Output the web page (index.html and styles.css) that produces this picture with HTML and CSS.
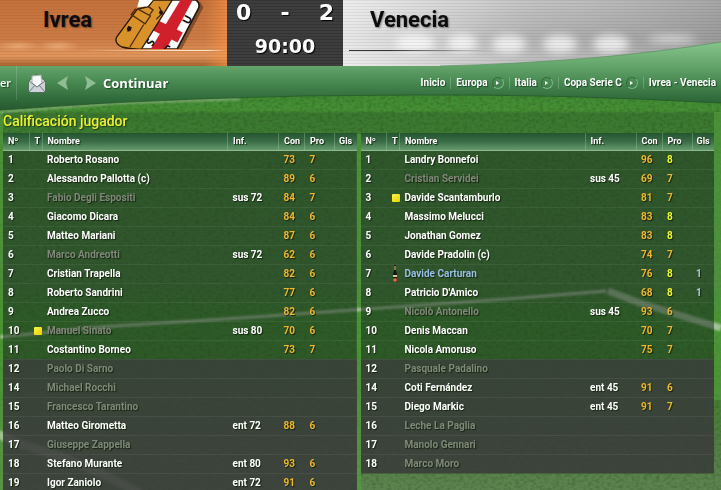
FILE: index.html
```html
<!DOCTYPE html>
<html lang="es">
<head>
    <meta charset="UTF-8">
    <meta name="viewport" content="width=device-width, initial-scale=1.0">
    <title>Ivrea - Venecia</title>
    <link rel="stylesheet" href="styles.css">
</head>
<body>
    <!-- Pitch and curved menu bar -->
    <svg class="backdrop" viewBox="0 0 721 490" preserveAspectRatio="none" aria-hidden="true">
        <defs>
            <linearGradient id="grass" x1="0" y1="0" x2="0" y2="490" gradientUnits="userSpaceOnUse">
                <stop offset="0.19" stop-color="#3f8a33"/>
                <stop offset="0.225" stop-color="#468f34"/>
                <stop offset="0.232" stop-color="#3b7830"/>
                <stop offset="0.3" stop-color="#3f7d32"/>
                <stop offset="0.58" stop-color="#437a39"/>
                <stop offset="0.64" stop-color="#3a842b"/>
                <stop offset="0.78" stop-color="#40832e"/>
                <stop offset="0.9" stop-color="#527e42"/>
                <stop offset="1" stop-color="#5d8450"/>
            </linearGradient>
            <linearGradient id="bar" x1="0" y1="42" x2="0" y2="110" gradientUnits="userSpaceOnUse">
                <stop offset="0" stop-color="#86c48a"/>
                <stop offset="0.35" stop-color="#64a56c"/>
                <stop offset="0.6" stop-color="#478750"/>
                <stop offset="0.85" stop-color="#2f6a3a"/>
                <stop offset="1" stop-color="#28592f"/>
            </linearGradient>
            <linearGradient id="stand" x1="0" y1="0" x2="0" y2="1">
                <stop offset="0" stop-color="#c6c6c6"/>
                <stop offset="0.5" stop-color="#b2b2b2"/>
                <stop offset="1" stop-color="#c4c4c4"/>
            </linearGradient>
            <linearGradient id="standSide" x1="0" y1="0" x2="1" y2="0">
                <stop offset="0" stop-color="#ffffff" stop-opacity="0.7"/>
                <stop offset="0.35" stop-color="#ffffff" stop-opacity="0.2"/>
                <stop offset="0.6" stop-color="#888888" stop-opacity="0.1"/>
                <stop offset="1" stop-color="#777777" stop-opacity="0.4"/>
            </linearGradient>
            <pattern id="scan" width="4" height="3" patternUnits="userSpaceOnUse">
                <rect width="4" height="1" fill="#000000" opacity="0.06"/>
            </pattern>
            <filter id="noise" x="0" y="0" width="1" height="1" color-interpolation-filters="sRGB">
                <feTurbulence type="fractalNoise" baseFrequency="0.25 0.35" numOctaves="3" seed="4"/>
                <feColorMatrix values="0 0 0 0 0.1  0 0 0 0 0.2  0 0 0 0 0.05  0.6 0 0 0 -0.24"/>
            </filter>
            <filter id="soft" x="-0.3" y="-0.3" width="1.6" height="1.6"><feGaussianBlur stdDeviation="4"/></filter>
            <filter id="chalk"><feGaussianBlur stdDeviation="1"/></filter>
        </defs>
        <rect y="60" width="721" height="430" fill="url(#grass)"/>
        <rect y="90" width="721" height="400" filter="url(#noise)"/>
        <path d="M0 112 H3 V490 H0 Z M356 134 H361 V490 H356 Z M714 112 H721 V400 H714 Z" fill="#5aa83f" opacity="0.5"/>
        <g fill="none" stroke="#d4dacd" filter="url(#chalk)">
            <path d="M0 337 L100 327 L240 318 L410 306 L520 298 L606 291" stroke-width="3" opacity="0.75"/>
            <path d="M608 291 L640 303 L721 328" stroke-width="7" opacity="0.65"/>
            <path d="M-5 433 L20 444 L60 456 L100 473 L140 493" stroke-width="9" opacity="0.6"/>
            <path d="M0 112 L120 103 L240 99" stroke-width="2" opacity="0.5"/>
        </g>
        <rect x="343" width="378" height="70" fill="url(#stand)"/>
        <rect x="343" width="378" height="70" fill="url(#standSide)"/>
        <g fill="#ffffff" filter="url(#soft)" opacity="0.75">
            <ellipse cx="415" cy="43" rx="20" ry="9"/>
            <ellipse cx="462" cy="43" rx="15" ry="9"/>
            <ellipse cx="509" cy="44" rx="17" ry="9"/>
            <ellipse cx="560" cy="44" rx="17" ry="9"/>
            <ellipse cx="611" cy="44" rx="18" ry="9"/>
            <ellipse cx="672" cy="39" rx="24" ry="3"/>
        </g>
        <rect x="343" width="378" height="70" fill="url(#scan)"/>
        <path d="M0 66 H440 Q600 62 721 42 V103 Q560 94 410 95 Q200 95 0 110 Z" fill="url(#bar)"/>
        <path d="M0 110 Q200 95 410 95 Q560 94 721 103" fill="none" stroke="#1f4d25" opacity="0.6"/>
        <path d="M440 66 Q600 62 721 42" fill="none" stroke="#5d8f62" opacity="0.7"/>
    </svg>

    <div class="screen">
        <header class="scoreboard">
            <div class="team team-home">
                <h2 class="team-name">Ivrea</h2>
                <svg class="badge" viewBox="0 0 300 148" aria-hidden="true">
                    <path d="M100 0 H265 L275 18 L207 148 H98 L40 142 Q16 130 22 116 Z" fill="#00000055" transform="translate(9 5)"/>
                    <path d="M110 0 H262 Q274 8 270 24 L205 148 H95 Z" fill="#ffffff" stroke="#241810" stroke-width="5"/>
                    <path d="M215 0 H252 L172 148 H125 Z" fill="#cf202c"/>
                    <path d="M148 62 L222 98 L206 128 L132 92 Z" fill="#cf202c"/>
                    <path d="M133 0 L118 20 L84 28 L22 112 Q14 130 38 142 Q65 149 97 148 L160 48 L190 0 Z" fill="#d9922a" stroke="#2c1a08" stroke-width="4"/>
                    <path d="M80 26 L66 44 L108 72 L124 48 L84 26 M118 20 L132 30 L122 44 M150 20 L160 40 L142 58 M104 74 L62 142" fill="none" stroke="#4b2c0b" stroke-width="4"/>
                    <path d="M90 0 H132 L112 20 L84 22 Z" fill="#ffffff"/>
                    <path d="M57 78 L68 82 L64 94 L55 96 L53 86 Z" fill="#20120a"/>
                    <circle cx="156" cy="38" r="6" fill="#20120a"/>
                    <path d="M166 148 L176 138 L184 142" fill="none" stroke="#111111" stroke-width="5"/>
                    <text class="badge-letter" transform="translate(240 76) rotate(-62)">U</text>
                    <text class="badge-letter" transform="translate(130 142) rotate(-62)">S</text>
                </svg>
            </div>
            <div class="score">
                <div class="score-goals"><span>0</span><span>-</span><span>2</span></div>
                <div class="score-time">90:00</div>
            </div>
            <div class="team team-away">
                <h2 class="team-name">Venecia</h2>
            </div>
        </header>

        <nav class="menu">
            <a class="menu-cut" href="#">er</a>
            <button class="icon-button mail" type="button" aria-label="Correo">
                <svg width="18" height="20" viewBox="0 0 18 20">
                    <path d="M1 8 L9 1 L17 8 V19 H1 Z" fill="#dfe4e6" stroke="#5b6c66"/>
                    <path d="M4 3 L13 2 L14 10 L9 14 L4 10 Z" fill="#f7f8f8" stroke="#a3aca9"/>
                    <path d="M1 8 L9 14 L17 8 V19 H1 Z" fill="#cdd3d6"/>
                    <path d="M1 19 L7 12 M17 19 L11 12 M1 8 L9 14 L17 8" fill="none" stroke="#6d7c79"/>
                </svg>
            </button>
            <button class="icon-button" type="button" aria-label="Atrás">
                <svg width="11" height="14" viewBox="0 0 11 14"><path d="M11 0 L0 7 L11 14 L9 7 Z" fill="#8fbd94"/></svg>
            </button>
            <button class="icon-button next" type="button" aria-label="Adelante">
                <svg width="11" height="14" viewBox="0 0 11 14"><path d="M0 0 L11 7 L0 14 L2 7 Z" fill="#8fbd94"/></svg>
            </button>
            <button class="continue" type="button">Continuar</button>
            <ul class="crumbs">
                <li><a href="#">Inicio</a></li>
                <li><a href="#">Europa</a><span class="more"></span></li>
                <li><a href="#">Italia</a><span class="more"></span></li>
                <li><a href="#">Copa Serie C</a><span class="more"></span></li>
                <li><a href="#">Ivrea - Venecia</a></li>
            </ul>
        </nav>

        <main class="ratings">
            <h1 class="ratings-title">Calificación jugador</h1>
            <div class="tables">
                <table class="players">
                    <colgroup><col class="col-num"><col class="col-card"><col><col class="col-inf"><col class="col-con"><col class="col-pro"><col class="col-gls"></colgroup>
                    <thead>
                        <tr><th>Nº</th><th>T</th><th>Nombre</th><th>Inf.</th><th>Con</th><th>Pro</th><th>Gls</th></tr>
                    </thead>
                    <tbody>
                        <tr><td>1</td><td></td><td>Roberto Rosano</td><td></td><td>73</td><td>7</td><td></td></tr>
                        <tr><td>2</td><td></td><td>Alessandro Pallotta (c)</td><td></td><td>89</td><td>6</td><td></td></tr>
                        <tr><td>3</td><td></td><td class="off">Fabio Degli Espositi</td><td>sus 72</td><td>84</td><td>7</td><td></td></tr>
                        <tr><td>4</td><td></td><td>Giacomo Dicara</td><td></td><td>84</td><td>6</td><td></td></tr>
                        <tr><td>5</td><td></td><td>Matteo Mariani</td><td></td><td>87</td><td>6</td><td></td></tr>
                        <tr><td>6</td><td></td><td class="off">Marco Andreotti</td><td>sus 72</td><td>62</td><td>6</td><td></td></tr>
                        <tr><td>7</td><td></td><td>Cristian Trapella</td><td></td><td>82</td><td>6</td><td></td></tr>
                        <tr><td>8</td><td></td><td>Roberto Sandrini</td><td></td><td>77</td><td>6</td><td></td></tr>
                        <tr><td>9</td><td></td><td>Andrea Zucco</td><td></td><td>82</td><td>6</td><td></td></tr>
                        <tr><td>10</td><td><span class="yellow-card"></span></td><td class="off">Manuel Sinato</td><td>sus 80</td><td>70</td><td>6</td><td></td></tr>
                        <tr><td>11</td><td></td><td>Costantino Borneo</td><td></td><td>73</td><td>7</td><td></td></tr>
                    </tbody>
                    <tbody class="bench">
                        <tr><td>12</td><td></td><td class="off">Paolo Di Sarno</td><td></td><td></td><td></td><td></td></tr>
                        <tr><td>14</td><td></td><td class="off">Michael Rocchi</td><td></td><td></td><td></td><td></td></tr>
                        <tr><td>15</td><td></td><td class="off">Francesco Tarantino</td><td></td><td></td><td></td><td></td></tr>
                        <tr><td>16</td><td></td><td>Matteo Girometta</td><td>ent 72</td><td>88</td><td>6</td><td></td></tr>
                        <tr><td>17</td><td></td><td class="off">Giuseppe Zappella</td><td></td><td></td><td></td><td></td></tr>
                        <tr><td>18</td><td></td><td>Stefano Murante</td><td>ent 80</td><td>93</td><td>6</td><td></td></tr>
                        <tr><td>19</td><td></td><td>Igor Zaniolo</td><td>ent 72</td><td>91</td><td>6</td><td></td></tr>
                    </tbody>
                </table>

                <table class="players">
                    <colgroup><col class="col-num"><col class="col-card"><col><col class="col-inf"><col class="col-con"><col class="col-pro"><col class="col-gls"></colgroup>
                    <thead>
                        <tr><th>Nº</th><th>T</th><th>Nombre</th><th>Inf.</th><th>Con</th><th>Pro</th><th>Gls</th></tr>
                    </thead>
                    <tbody>
                        <tr><td>1</td><td></td><td>Landry Bonnefoi</td><td></td><td>96</td><td class="top">8</td><td></td></tr>
                        <tr><td>2</td><td></td><td class="off">Cristian Servidei</td><td>sus 45</td><td>69</td><td>7</td><td></td></tr>
                        <tr><td>3</td><td><span class="yellow-card"></span></td><td>Davide Scantamburlo</td><td></td><td>81</td><td>7</td><td></td></tr>
                        <tr><td>4</td><td></td><td>Massimo Melucci</td><td></td><td>83</td><td class="top">8</td><td></td></tr>
                        <tr><td>5</td><td></td><td>Jonathan Gomez</td><td></td><td>83</td><td class="top">8</td><td></td></tr>
                        <tr><td>6</td><td></td><td>Davide Pradolin (c)</td><td></td><td>74</td><td>7</td><td></td></tr>
                        <tr><td>7</td><td><svg class="bottle" width="6" height="17" viewBox="0 0 6 17"><path d="M2 0 H4 V6 L5 9 V17 H1 V9 L2 6 Z" fill="#17140c"/><path d="M2 1 H4 V5 H2 Z" fill="#8a7440"/><path d="M1 10 H5 V12 H1 Z" fill="#d8c9a0"/><circle cx="3" cy="15" r="2" fill="#d4683c"/></svg></td><td class="best">Davide Carturan</td><td></td><td>76</td><td class="top">8</td><td>1</td></tr>
                        <tr><td>8</td><td></td><td>Patricio D'Amico</td><td></td><td>68</td><td class="top">8</td><td>1</td></tr>
                        <tr><td>9</td><td></td><td class="off">Nicolò Antonello</td><td>sus 45</td><td>93</td><td>6</td><td></td></tr>
                        <tr><td>10</td><td></td><td>Denis Maccan</td><td></td><td>70</td><td>7</td><td></td></tr>
                        <tr><td>11</td><td></td><td>Nicola Amoruso</td><td></td><td>75</td><td>7</td><td></td></tr>
                    </tbody>
                    <tbody class="bench">
                        <tr><td>12</td><td></td><td class="off">Pasquale Padalino</td><td></td><td></td><td></td><td></td></tr>
                        <tr><td>14</td><td></td><td>Coti Fernández</td><td>ent 45</td><td>91</td><td>6</td><td></td></tr>
                        <tr><td>15</td><td></td><td>Diego Markic</td><td>ent 45</td><td>91</td><td>7</td><td></td></tr>
                        <tr><td>16</td><td></td><td class="off">Leche La Paglia</td><td></td><td></td><td></td><td></td></tr>
                        <tr><td>17</td><td></td><td class="off">Manolo Gennari</td><td></td><td></td><td></td><td></td></tr>
                        <tr><td>18</td><td></td><td class="off">Marco Moro</td><td></td><td></td><td></td><td></td></tr>
                    </tbody>
                </table>
            </div>
        </main>
    </div>
</body>
</html>
```
FILE: styles.css
```css
* {
    box-sizing: border-box;
}

body {
    margin: 0;
    height: 100vh;
    overflow: hidden;
    position: relative;
    background-color: #3f7a2f;
    color: #fff;
    font-family: 'Open Sans', 'Noto Sans', sans-serif;
    font-size: 10px;
}

a {
    color: inherit;
    text-decoration: none;
}

button {
    background: none;
    border: none;
    padding: 0;
    color: inherit;
    font-family: inherit;
    cursor: pointer;
}

.backdrop {
    position: absolute;
    top: 0;
    left: 0;
    width: 100%;
    height: 100%;
}

.screen {
    position: relative;
}

/* Scoreboard */
.scoreboard {
    display: grid;
    grid-template-columns: 227px 116px 1fr;
    height: 66px;
}

.team {
    display: flex;
    align-items: flex-start;
}

.team-home {
    padding-left: 43px;
    background:
        linear-gradient(90deg, transparent 85px, #ffe3c4 170px, #ffe3c4 210px, transparent 226px) 0 50px / 100% 1px no-repeat,
        repeating-linear-gradient(rgba(0, 0, 0, 0.06) 0 1px, transparent 1px 3px),
        radial-gradient(ellipse at 18px 46px, rgba(250, 190, 140, 0.6), transparent 24px),
        radial-gradient(ellipse at 58px 46px, rgba(250, 190, 140, 0.6), transparent 22px),
        linear-gradient(90deg, transparent 90%, rgba(255, 150, 70, 0.6)),
        linear-gradient(#c4703a, #cc7c46 60%, #e2965c 85%, #a8622f);
}

.team-away {
    padding-left: 27px;
    background: linear-gradient(90deg, #333 40px, transparent 145px) 6px 50px / 100% 1px no-repeat;
}

.team-name {
    width: 66px;
    margin: 7px 0 0;
    color: #0c0c0c;
    font-family: 'Roboto', sans-serif;
    font-size: 22px;
    line-height: 26px;
    font-weight: 700;
    text-shadow: 1px 1px 2px rgba(0, 0, 0, 0.4);
}

.badge {
    width: 100px;
    height: 49px;
}

.badge-letter {
    font-family: 'Open Sans', sans-serif;
    font-size: 34px;
    font-weight: 700;
    fill: #111;
}

.score {
    padding: 0 9px;
    background: repeating-linear-gradient(#343434 0 1px, #3d3d3d 1px 3px);
    font-family: 'DejaVu Sans', sans-serif;
    font-weight: 700;
    text-align: center;
    text-shadow: 1px 1px 1px #000;
}

.score-goals {
    display: flex;
    justify-content: space-between;
    font-size: 22px;
    line-height: 26px;
}

.score-time {
    margin-top: 9px;
    font-size: 19px;
    line-height: 22px;
}

/* Menu bar */
.menu {
    display: flex;
    align-items: center;
    height: 34px;
    padding-right: 5px;
    text-shadow: 1px 1px 1px #1d4a26;
}

.menu-cut {
    width: 17px;
    border-right: 1px solid rgba(255, 255, 255, 0.15);
    font-size: 11px;
    line-height: 34px;
    font-weight: 600;
}

.icon-button {
    display: flex;
    margin-left: 11px;
}

.next {
    margin-left: 17px;
}

.continue {
    margin-left: 7px;
    font-size: 13px;
    font-weight: 700;
    text-shadow: inherit;
}

.crumbs {
    display: flex;
    align-items: center;
    margin: 0 0 0 auto;
    padding: 0;
    list-style: none;
    font-family: 'Roboto', sans-serif;
    font-weight: 700;
    line-height: 12px;
}

.crumbs li {
    display: flex;
    align-items: center;
    gap: 4px;
}

.crumbs li + li {
    margin-left: 5px;
    padding-left: 5px;
    border-left: 1px solid rgba(255, 255, 255, 0.2);
}

.more {
    display: flex;
    align-items: center;
    justify-content: center;
    width: 12px;
    height: 12px;
    border: 1px solid #2f6b3a;
    border-right-color: #7ab583;
    border-bottom-color: #7ab583;
    border-radius: 50%;
}

.more::before {
    content: "";
    border-left: 3px solid #fff;
    border-top: 2px solid transparent;
    border-bottom: 2px solid transparent;
}

/* Ratings */
.ratings {
    padding: 11px 7px 0 3px;
}

.ratings-title {
    margin: 0;
    color: #eef032;
    font-family: 'Roboto', sans-serif;
    font-size: 14px;
    line-height: 20px;
    font-weight: 500;
    text-shadow: 1px 1px 1px #1b3d12;
}

.tables {
    display: flex;
    align-items: flex-start;
    gap: 4px;
    margin-top: 2px;
}

.players {
    flex: 1;
    width: 0;
    table-layout: fixed;
    border-collapse: collapse;
    background-color: rgba(34, 56, 36, 0.55);
    font-family: 'Roboto', sans-serif;
    text-shadow: 1px 1px 1px #15260f;
}

.col-num {
    width: 26px;
}

.col-card {
    width: 13px;
}

.col-inf {
    width: 51px;
}

.col-con {
    width: 26px;
}

.col-pro {
    width: 30px;
}

.col-gls {
    width: 22px;
}

.players th {
    height: 17px;
    padding: 0 0 0 5px;
    border-right: 1px solid rgba(160, 210, 165, 0.35);
    border-bottom: 1px solid #8fb88f;
    background: linear-gradient(#24552f, #3a6c46 50%, #659a6c);
    font-size: 9px;
    line-height: 16px;
    font-weight: 700;
    text-align: left;
}

.players th:last-child {
    padding-left: 4px;
    border-right: none;
}

.players td {
    height: 19px;
    padding: 0 0 0 5px;
    border-bottom: 1px solid rgba(255, 255, 255, 0.06);
    line-height: 18px;
    font-weight: 700;
    white-space: nowrap;
}

.players td:nth-child(5),
.players td:nth-child(6) {
    color: #f0b62c;
}

.players td:nth-child(7) {
    padding-left: 4px;
    color: #a9cbe0;
}

.players td.top {
    color: #f4f42c;
}

.players td.off {
    color: #80887a;
}

.players td.best {
    color: #98bfe6;
}

.bench {
    background-color: rgba(62, 60, 62, 0.7);
}

.yellow-card,
.bottle {
    display: block;
}

.yellow-card {
    width: 8px;
    height: 8px;
    border-radius: 1px;
    background: linear-gradient(135deg, #fff646, #e6d200);
}
```
